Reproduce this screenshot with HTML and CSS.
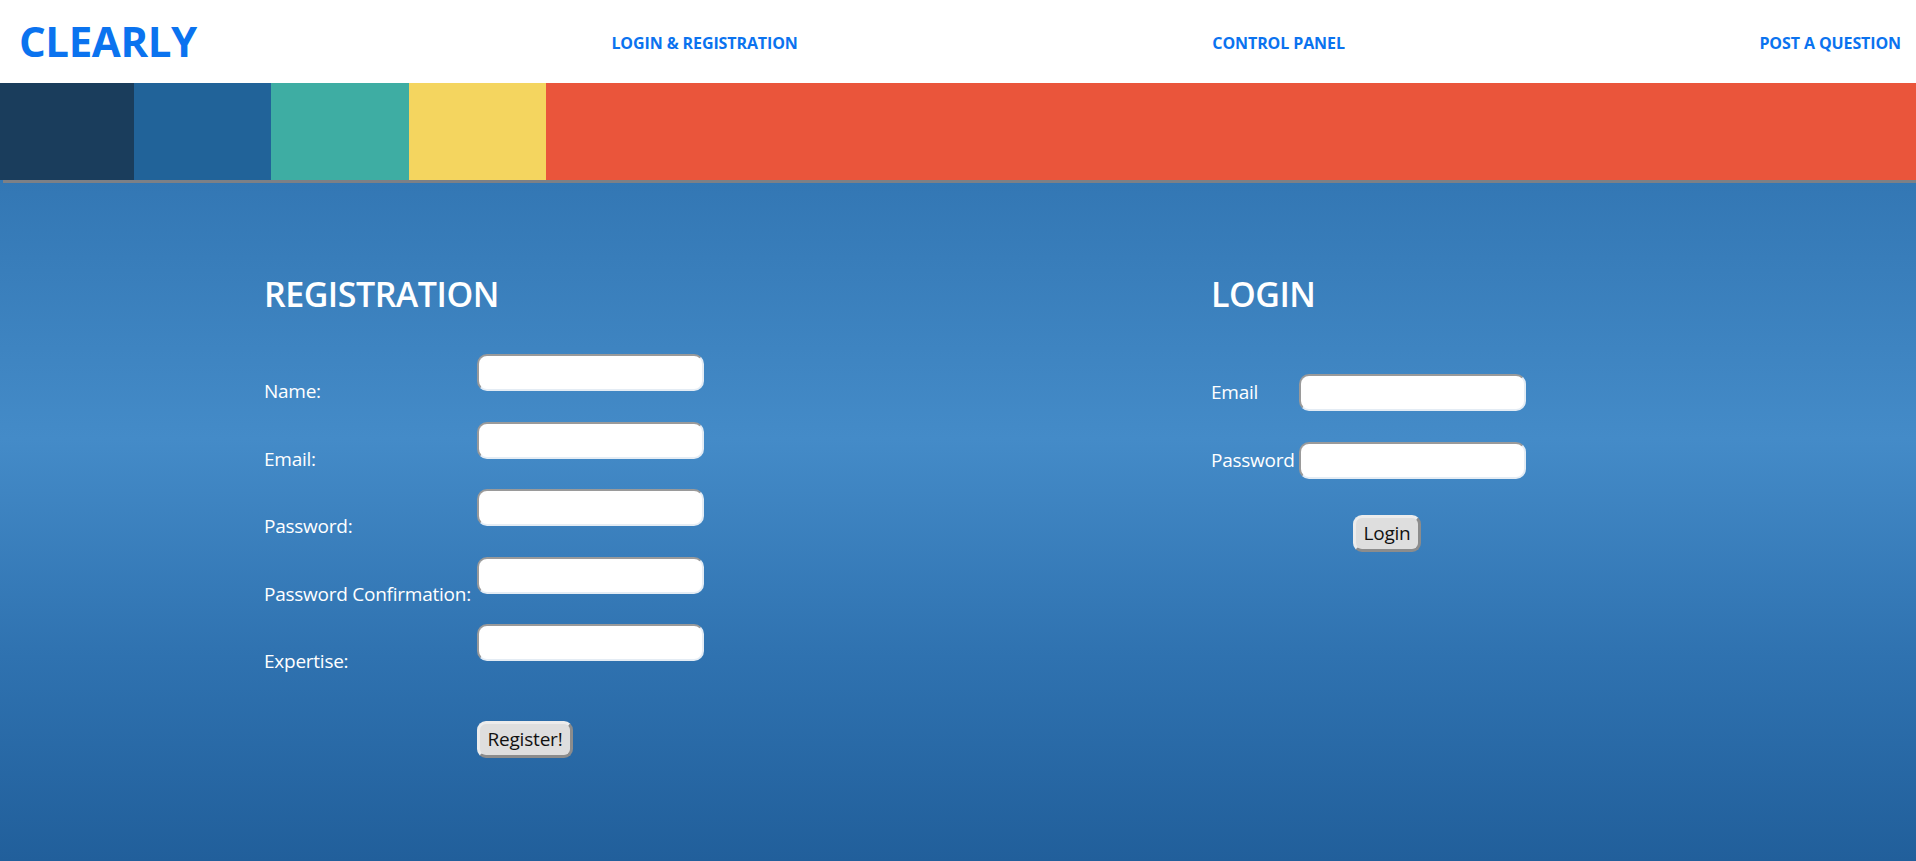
FILE: index.html
```html
<!DOCTYPE html>
<html lang="en">
<head>
<meta charset="utf-8">
<title>Clearly</title>
<link rel="stylesheet" href="styles.css">
</head>
<body>
<header class="topbar">
  <a class="logo" href="#">CLEARLY</a>
  <a class="nav-link" href="#">LOGIN &amp; REGISTRATION</a>
  <a class="nav-link" href="#">CONTROL PANEL</a>
  <a class="nav-link" href="#">POST A QUESTION</a>
</header>
<div class="stripes">
  <div class="stripe stripe-navy"></div>
  <div class="stripe stripe-blue"></div>
  <div class="stripe stripe-teal"></div>
  <div class="stripe stripe-yellow"></div>
  <div class="stripe stripe-red"></div>
</div>
<main class="content">
  <section class="panel panel-reg">
    <h2 class="panel-title">REGISTRATION</h2>
    <form class="reg-form">
      <label class="reg-label">Name:</label>
      <input class="field" type="text">
      <label class="reg-label">Email:</label>
      <input class="field" type="text">
      <label class="reg-label">Password:</label>
      <input class="field" type="password">
      <label class="reg-label">Password Confirmation:</label>
      <input class="field" type="password">
      <label class="reg-label">Expertise:</label>
      <input class="field" type="text">
      <span class="spacer"></span>
      <button class="btn btn-register" type="button">Register!</button>
    </form>
  </section>
  <section class="panel panel-login">
    <h2 class="panel-title">LOGIN</h2>
    <form class="login-form">
      <label class="login-label">Email</label>
      <input class="field" type="text">
      <label class="login-label">Password</label>
      <input class="field" type="password">
    </form>
    <div class="login-actions">
      <button class="btn btn-login" type="button">Login</button>
    </div>
  </section>
</main>
</body>
</html>
```
FILE: styles.css
```css
* { box-sizing: border-box; }
html, body { margin: 0; padding: 0; }
body {
  font-family: "Open Sans", "Noto Sans", sans-serif;
  background: #ffffff;
  height: 861px;
  overflow: hidden;
}

.topbar {
  height: 83px;
  display: flex;
  align-items: center;
  justify-content: space-between;
  padding: 0 15px 0 19px;
  background: #ffffff;
}
.logo {
  color: #0b73ef;
  font-weight: 700;
  font-size: 42px;
  letter-spacing: -0.4px;
  text-decoration: none;
  line-height: 1;
  margin-top: -2px;
}
.nav-link {
  color: #0b73ef;
  font-weight: 700;
  font-size: 16px;
  letter-spacing: -0.1px;
  text-decoration: none;
  margin-top: 2px;
}

.stripes {
  display: flex;
  height: 97px;
  position: relative;
  z-index: 1;
  box-shadow: 3px 3px 0 rgba(125, 128, 134, 1);
}
.stripe { width: 137.3px; flex: none; }
.stripe-navy { background: #1a3d5c; width: 134px; }
.stripe-blue { background: #216399; }
.stripe-teal { background: #3eada3; }
.stripe-yellow { background: #f4d55f; }
.stripe-red { background: #ea553b; flex: 1; }

.content {
  height: 681px;
  display: flex;
  background: linear-gradient(to bottom, #3377b4 0%, #448bc8 38%, #2f72b0 70%, #215f9b 100%);
  color: #ffffff;
}
.panel { padding-top: 94px; }
.panel-reg { width: 958px; padding-left: 264px; }
.panel-login { padding-left: 253px; }

.panel-title {
  margin: 0;
  font-size: 34px;
  font-weight: 600;
  line-height: 40px;
  letter-spacing: -0.5px;
}

.field {
  width: 227px;
  height: 37px;
  border: 2px solid;
  border-color: #9a9a9a #e4ecf4 #e4ecf4 #9a9a9a;
  border-radius: 10px;
  background: #ffffff;
  padding: 0 8px;
  font: inherit;
  margin: 0;
}

.reg-form {
  margin-top: 40px;
  display: grid;
  grid-template-columns: 213px 227px;
  grid-auto-rows: 67.5px;
}
.reg-label {
  font-size: 19px;
  line-height: 26px;
  padding-top: 24px;
  white-space: nowrap;
  letter-spacing: -0.25px;
}
.spacer { display: block; }

.btn {
  height: 37px;
  background: #dedede;
  border: 3px solid;
  border-color: #ececec #8c8c8c #8c8c8c #ececec;
  border-radius: 9px;
  font-family: "Open Sans", "Noto Sans", sans-serif;
  font-size: 19px;
  letter-spacing: -0.2px;
  color: #111111;
  padding: 0 4px;
  line-height: 1;
}
.btn-register {
  width: 96px;
  align-self: start;
  margin-top: 29px;
}

.login-form {
  margin-top: 60px;
  display: grid;
  grid-template-columns: 88px 227px;
  grid-auto-rows: 68px;
  align-items: start;
}
.login-label {
  font-size: 19px;
  line-height: 37px;
  letter-spacing: -0.25px;
  white-space: nowrap;
}
.login-actions {
  padding-left: 142px;
  margin-top: 5px;
}
.btn-login { width: 68px; }
```
